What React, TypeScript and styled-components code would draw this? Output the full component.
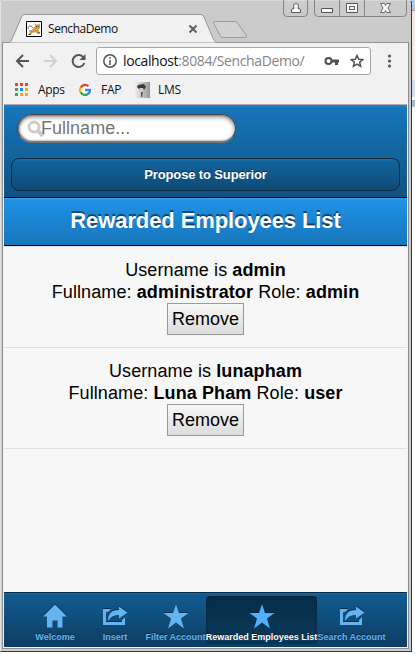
import React from "react";
import styled, { createGlobalStyle } from "styled-components";

const Global = createGlobalStyle`
  * { box-sizing: border-box; }
  body { margin: 0; background: #fff; font-family: "Liberation Sans", Arial, sans-serif; overflow: hidden; }
  button, input { font-family: inherit; margin: 0; }
`;

const Desktop = styled.div`
  width: 415px;
  height: 654px;
  background: linear-gradient(#a9cdf5 0 10px, #c08f8f 10px 11px, #f7e8e6 11px 80px, #cfdcf0 80px 97px, #fff 97px 100px, #9db9e2 100px 107px, #fff 107px);
  overflow: hidden;
`;
const Window = styled.div`
  width: 412px;
  height: 652px;
  background: #cbcbcb;
  border-right: 1px solid #363636;
  border-bottom: 1px solid #363636;
  border-top: 1px solid #d9d9d9;
  border-left: 1px solid #e2e2e2;
  border-radius: 2px 3px 0 0;
  display: flex;
  flex-direction: column;
`;
const TabStrip = styled.div`
  position: relative;
  height: 41px;
  flex: none;
`;
const StripArt = styled.svg`
  position: absolute;
  left: -1px;
  top: -1px;
`;
const TabLabel = styled.div`
  position: absolute;
  left: 47px;
  top: 20px;
  font: 12px/16px "Open Sans", sans-serif;
  letter-spacing: -0.45px;
  color: #111;
`;
const Frame = styled.div`
  flex: 1;
  margin: 0 2px 2px 1px;
  border: 1px solid #8e8e8e;
  border-top: 0;
  padding: 0 1px 1px;
  background: #f3f3f3;
  display: flex;
  flex-direction: column;
`;
const Chrome = styled.div`
  height: 63px;
  flex: none;
  background: #f1f1f1;
  border-bottom: 1px solid #b4aead;
`;
const NavRow = styled.div`
  height: 38px;
  display: flex;
  align-items: center;
  padding-left: 11px;
`;
const NavIcon = styled.svg<{ $gap: number }>`
  flex: none;
  margin-right: ${(p) => p.$gap}px;
`;
const Omnibox = styled.div`
  width: 275px;
  height: 28px;
  background: #fff;
  border: 1px solid #a6a6a6;
  border-radius: 3px;
  display: flex;
  align-items: center;
  padding: 0 6px;
`;
const Url = styled.div`
  flex: 1;
  font: 14px/20px "Open Sans", sans-serif;
  letter-spacing: -0.38px;
  color: #858585;
  white-space: nowrap;
  margin-top: -1px;
  span { color: #111; }
`;
const Bookmarks = styled.div`
  display: flex;
  height: 19px;
  align-items: center;
  padding-left: 11px;
  font: 12px/16px "Open Sans", sans-serif;
  letter-spacing: -0.3px;
  color: #111;
`;
const Bookmark = styled.div<{ $width: number; $gap: number }>`
  width: ${(p) => p.$width}px;
  display: flex;
  align-items: center;
  gap: ${(p) => p.$gap}px;
`;
const SearchPanel = styled.div`
  height: 93px;
  flex: none;
  padding: 9px 7px 0;
  background: linear-gradient(#1c86d6 0, #1676ba 3px, #105282 100%);
  border-bottom: 1px solid #000;
`;
const SearchField = styled.label`
  display: flex;
  align-items: center;
  width: 219px;
  height: 29px;
  margin-left: 6px;
  padding-left: 9px;
  border: 1px solid #444;
  border-bottom: 2px solid #777;
  border-radius: 15px;
  background: #fff;
  box-shadow: inset 0 2px 4px rgba(0, 0, 0, 0.5), inset 1px 0 2px rgba(0, 0, 0, 0.5);
`;
const SearchInput = styled.input`
  width: 180px;
  margin-left: -3px;
  padding: 0;
  border: 0;
  background: none;
  outline: none;
  font-size: 18px;
  line-height: 22px;
  letter-spacing: 0.02px;
  &::placeholder { color: #757575; opacity: 1; }
`;
const ProposeButton = styled.button`
  display: block;
  width: 389px;
  height: 33px;
  margin-top: 15px;
  padding: 0;
  border: 1px solid #082b44;
  border-radius: 8px;
  background: linear-gradient(#1770ae 0, #12639b 3px, #0e4a75 100%);
  color: #fff;
  font-size: 13px;
  font-weight: bold;
  letter-spacing: -0.13px;
  text-shadow: 0 -1px 0 rgba(0, 0, 0, 0.5);
`;
const TitleBar = styled.h1`
  height: 48px;
  flex: none;
  margin: 0;
  background: linear-gradient(#3ba2ee 0, #1f92e5 2px, #1676bb 100%);
  border-bottom: 1px solid #000;
  color: #fff;
  font-size: 22px;
  line-height: 46px;
  letter-spacing: -0.1px;
  text-align: center;
  text-shadow: 0 -2px 0 rgba(0, 0, 0, 0.5);
`;
const List = styled.main`
  flex: 1;
  background: #f7f7f7;
  border-top: 1px solid #dedede;
`;
const Item = styled.div`
  height: 101px;
  padding-top: 12px;
  border-bottom: 1px solid #dedede;
  text-align: center;
  font-size: 18px;
  line-height: 22px;
  letter-spacing: 0.1px;
  color: #000;
`;
const RemoveButton = styled.button`
  display: block;
  width: 77px;
  height: 32px;
  margin: 0 auto;
  padding: 0;
  border: 1px solid #999;
  background: linear-gradient(#f7f7f7, #dcdcdc);
  font-size: 18px;
  line-height: 22px;
  color: #000;
`;
const TabBar = styled.nav`
  height: 55px;
  flex: none;
  display: flex;
  justify-content: center;
  padding: 4px 0;
  border-top: 1px solid #062a45;
  background: linear-gradient(#1768a4 0, #115b90 2px, #0c3d61 100%);
`;
const Tab = styled.div<{ $width: number; $active?: boolean }>`
  width: ${(p) => p.$width}px;
  flex: none;
  height: 48px;
  margin-top: -1px;
  display: flex;
  flex-direction: column;
  align-items: center;
  border-radius: 4px;
  background: ${(p) => (p.$active ? "linear-gradient(#072c46, #0b3a5c)" : "none")};
  box-shadow: ${(p) => (p.$active ? "inset 0 0 3px #05233a" : "none")};
  color: ${(p) => (p.$active ? "#fff" : "#64b4f0")};
  font-size: 9px;
  line-height: 12px;
  font-weight: bold;
  white-space: nowrap;
  text-shadow: 0 -1px 0 rgba(0, 0, 0, 0.5);
  svg { flex: none; margin-top: 7px; margin-bottom: 2px; fill: ${(p) => (p.$active ? "#50b1fa" : "#64b4f0")}; filter: drop-shadow(0 -1px 0 rgba(0, 20, 40, 0.6)); }
`;

const glyphs = {
  home: "M13 1.500 1 13.500H5V24.500H10.500V17.500H15.500V24.500H20.500V13.500H25Z",
  share: "M1 6H9L6 9H4V19H20V17L23 14V22H1ZM6 18C6 10 10 7 17 7V3.500L25.500 9.500L17 15.500V12C12 12 9 13.500 6 18Z",
  star: "M13 1 16 10H25.5L18 15.5 21 25.5 13 19.5 5 25.5 8 15.5 .5 10H10Z",
};
const tabs: { label: string; icon: keyof typeof glyphs; width: number; active?: boolean }[] = [
  { label: "Welcome", icon: "home", width: 60 },
  { label: "Insert", icon: "share", width: 60 },
  { label: "Filter Account", icon: "star", width: 61 },
  { label: "Rewarded Employees List", icon: "star", width: 111, active: true },
  { label: "Search Account", icon: "share", width: 69 },
];
const employees = [
  { username: "admin", fullname: "administrator", role: "admin" },
  { username: "lunapham", fullname: "Luna Pham", role: "user" },
];
const appColors = ["#ea4335", "#ea4335", "#ea4335", "#34a853", "#2684fc", "#f5a90b", "#34a853", "#f5a90b", "#f5a90b"];

export default function App() {
  return (
    <Desktop>
      <Global />
      <Window>
        <TabStrip>
          <StripArt width="411" height="43" fill="none">
            <path d="M2.5 43V42.5H9.5Q11 42 12 39L22 16Q22.500 14.500 24 14.500H201Q203 14.500 204 17L213 38Q215 42.500 217 42.500H408.500V43Z" fill="#f1f1f1" stroke="#939393" />
            <path d="M214.500 21.500H235Q237 21.500 238 23.500L246 35Q247.500 37.500 245 37.500H223Q221 37.500 220 35.500L213.500 23Q213 21.500 214.500 21.500Z" fill="#d2d2d2" stroke="#999" />
            <path d="M283.500 0V13Q283.500 16.500 287 16.500H304Q307.500 16.500 307.500 13V0M314.500 0V13Q314.500 16.500 318 16.500H403Q406.500 16.500 406.500 13V0M339.500 0V16M364.500 0V16" stroke="#858585" />
            <path d="M291.500 12.500V10Q292 8.500 294 8.500Q292.500 4 296 3.500Q299.500 4 298 8.500Q300 8.500 300.500 10V12.500ZM321.500 8.500H332.500V12.500H321.500ZM346.500 3.500H357.500V12.500H346.500ZM349.500 6.500H354.500V9.500H349.500Z" fill="#fafafa" stroke="#555" />
            <path d="M380.500 3.500H384.500L385.500 5.500L386.500 3.500H390.500L388 8L390.500 12.500H386.500L385.500 10.500L384.500 12.500H380.500L383 8Z" fill="#fafafa" stroke="#666" />
            <path d="M26.500 21.500H41.500V36.500H26.500Z" fill="#fff" stroke="#000" />
            <path d="M28.500 34L31 31L33 28.500L35 26L34.500 23L36.500 24.500H38.500L40 23.500V28L38.500 30L40.500 33.500L37 32.500L33 32.500L31 34.500Z" fill="#cfa042" />
            <path d="M28 29Q28 25 31 26Q32 27 33 28M29 31H32" stroke="#777" />
            <path d="M28.500 34.500H31M36 26.500H37M38 26.500H39M37 33H40" stroke="#4f4331" />
            <path d="M189.500 25.500L196.500 32.500M196.500 25.500L189.500 32.500" stroke="#606060" strokeWidth="2" />
          </StripArt>
          <TabLabel>SenchaDemo</TabLabel>
        </TabStrip>
        <Frame>
          <Chrome>
            <NavRow>
              <NavIcon $gap={13} width="15" height="16" fill="none" stroke="#555" strokeWidth="2"><path d="M14 8H2M8 2L2 8L8 14" /></NavIcon>
              <NavIcon $gap={13} width="15" height="16" fill="none" stroke="#d0d0d0" strokeWidth="2"><path d="M1 8H13M7 2L13 8L7 14" /></NavIcon>
              <NavIcon $gap={10} width="15" height="16" fill="none" stroke="#555" strokeWidth="2"><path d="M12.500 4.500A6 6 0 1 0 13.300 10" /><path d="M14.500 1V7H8.500Z" fill="#555" stroke="none" /></NavIcon>
              <Omnibox>
                <NavIcon $gap={6} width="14" height="14" fill="none" stroke="#555" strokeWidth="1.5"><circle cx="7" cy="7" r="6.200" /><path d="M7 6V11M7 3V4.700" /></NavIcon>
                <Url><span>localhost</span>:8084/SenchaDemo/</Url>
                <NavIcon $gap={11} width="15" height="10" fill="none" stroke="#505050" strokeWidth="2"><circle cx="4.500" cy="5" r="3" /><path d="M7 5H15M12.500 5V9" strokeWidth="3" /></NavIcon>
                <NavIcon $gap={0} width="14" height="14" fill="none" stroke="#505050" strokeWidth="1.500"><path d="M7 1.500L8.700 5.300 12.800 5.600 9.700 8.300 10.600 12.300 7 10.200 3.400 12.300 4.300 8.300 1.200 5.600 5.300 5.300Z" /></NavIcon>
              </Omnibox>
              <NavIcon $gap={0} width="36" height="16" fill="#555"><circle cx="18.500" cy="3" r="1.600" /><circle cx="18.500" cy="8" r="1.600" /><circle cx="18.500" cy="13" r="1.600" /></NavIcon>
            </NavRow>
            <Bookmarks>
              <Bookmark $width={63} $gap={10}>
                <svg width="13" height="13">{appColors.map((c, i) => <rect key={i} x={(i % 3) * 5} y={Math.floor(i / 3) * 5} width="3" height="3" fill={c} />)}</svg>
                Apps
              </Bookmark>
              <Bookmark $width={56} $gap={9}>
                <svg width="14" height="14" fill="none" strokeWidth="2.400">
                  <circle cx="7" cy="7" r="7" fill="#fff" />
                  <path d="M10.500 3.200A5 5 0 0 0 2.600 4.700" stroke="#ea4335" />
                  <path d="M2.600 4.500A5 5 0 0 0 2.600 9.500" stroke="#fbbc05" />
                  <path d="M2.600 9.300A5 5 0 0 0 10.400 10.700" stroke="#34a853" />
                  <path d="M10.200 10.900A5 5 0 0 0 12 7H7" stroke="#4285f4" />
                </svg>
                FAP
              </Bookmark>
              <Bookmark $width={70} $gap={8}>
                <svg width="16" height="16">
                  <defs><linearGradient id="portrait"><stop stopColor="#f4f4f4" /><stop offset="1" stopColor="#969696" /></linearGradient></defs>
                  <path d="M0 0H16V16H0Z" fill="url(#portrait)" />
                  <path d="M4 3L10 2 12 5 10 8 9 6H6L5 7 3 5Z" fill="#3b3b3b" />
                  <path d="M6 6H9L9 9 8 11H7Z" fill="#ccc" />
                  <path d="M7 10H9L8 15H7Z" fill="#555" />
                </svg>
                LMS
              </Bookmark>
            </Bookmarks>
          </Chrome>
          <SearchPanel>
            <SearchField>
              <svg width="17" height="17" fill="none" stroke="#ccc" strokeWidth="3"><circle cx="7" cy="7" r="5" /><path d="M10.500 10.500L16 16" strokeWidth="4" /></svg>
              <SearchInput placeholder="Fullname..." />
            </SearchField>
            <ProposeButton>Propose to Superior</ProposeButton>
          </SearchPanel>
          <TitleBar>Rewarded Employees List</TitleBar>
          <List>
            {employees.map((e) => (
              <Item key={e.username}>
                <div>Username is <b>{e.username}</b></div>
                <div>Fullname: <b>{e.fullname}</b> Role: <b>{e.role}</b></div>
                <RemoveButton>Remove</RemoveButton>
              </Item>
            ))}
          </List>
          <TabBar>
            {tabs.map((t) => (
              <Tab key={t.label} $width={t.width} $active={t.active}>
                <svg width="26" height="26" viewBox="0 0 26 26"><path d={glyphs[t.icon]} /></svg>
                {t.label}
              </Tab>
            ))}
          </TabBar>
        </Frame>
      </Window>
    </Desktop>
  );
}
